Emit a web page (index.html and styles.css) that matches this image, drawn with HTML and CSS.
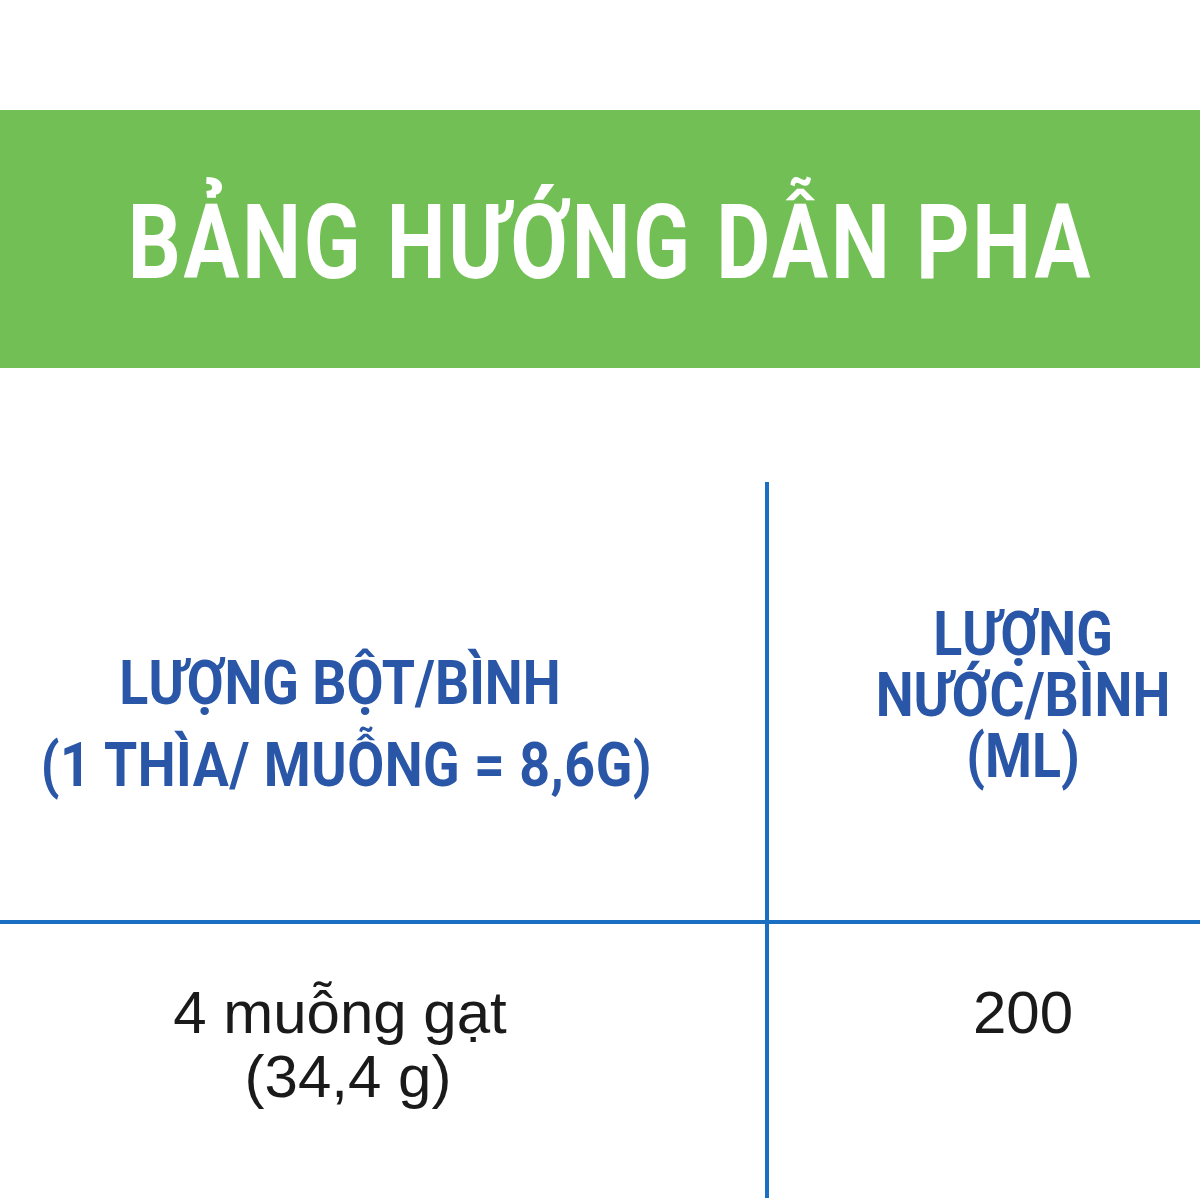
FILE: index.html
```html
<!DOCTYPE html>
<html lang="vi">
<head>
<meta charset="utf-8">
<title>Bảng hướng dẫn pha</title>
<link rel="stylesheet" href="styles.css">
</head>
<body>
<div class="page">
  <div class="banner">
    <h1 class="title">BẢNG HƯỚNG DẪN PHA</h1>
  </div>
  <div class="table">
    <div class="cell head left">
      <div class="head-text head-left-text">
        <div class="line">LƯỢNG BỘT/BÌNH</div>
        <div class="line line-shift">(1 THÌA/ MUỖNG = 8,6G)</div>
      </div>
    </div>
    <div class="cell head right">
      <div class="head-text head-right-text">LƯỢNG<br>NƯỚC/BÌNH<br>(ML)</div>
    </div>
    <div class="cell body left">
      <div class="body-text">
        <div class="line">4 muỗng gạt</div>
        <div class="line body-shift">(34,4 g)</div>
      </div>
    </div>
    <div class="cell body right">
      <div class="body-text">200</div>
    </div>
  </div>
</div>
</body>
</html>
```

FILE: styles.css
```css
html, body {
  margin: 0;
  padding: 0;
  background: #ffffff;
}
.page {
  width: 1200px;
  height: 1200px;
  overflow: hidden;
  padding-top: 110px;
  box-sizing: border-box;
}
.banner {
  height: 258px;
  background: #72bf55;
  display: flex;
  align-items: center;
  justify-content: center;
  padding-left: 20px;
  box-sizing: border-box;
}
.title {
  margin: 0;
  color: #ffffff;
  font-family: "Roboto", "Liberation Sans", sans-serif;
  font-weight: bold;
  font-size: 104px;
  letter-spacing: 3.5px;
  line-height: 1;
  white-space: nowrap;
  transform: scaleX(0.8);
  transform-origin: center;
  padding-top: 8px;
}
.table {
  margin-top: 114px;
  display: grid;
  grid-template-columns: 769px 1fr;
  grid-template-rows: 442px 274px;
}
.cell {
  box-sizing: border-box;
  text-align: center;
}
.cell.left {
  border-right: 4px solid #1b6fc3;
  padding-right: 85px;
}
.cell.right {
  padding-left: 77px;
}
.cell.head {
  border-bottom: 4px solid #1b6fc3;
  color: #2a56a7;
  font-family: "Roboto", "Liberation Sans", sans-serif;
  font-weight: bold;
  font-size: 61px;
}
.cell.head.left {
  padding-top: 160px;
}
.cell.head.right {
  padding-top: 122px;
}
.head-text {
  white-space: nowrap;
  transform: scaleX(0.88);
  transform-origin: center;
}
.head-left-text {
  line-height: 82px;
}
.line-shift {
  padding-right: 10px;
  letter-spacing: 0.6px;
}
.head-right-text {
  line-height: 61px;
}
.cell.body {
  padding-top: 57px;
  font-family: "Liberation Sans", Arial, sans-serif;
  font-size: 60px;
  line-height: 64px;
  color: #1a1a1a;
}
.body-text {
  white-space: nowrap;
}
.body-shift {
  padding-left: 16px;
}
```
